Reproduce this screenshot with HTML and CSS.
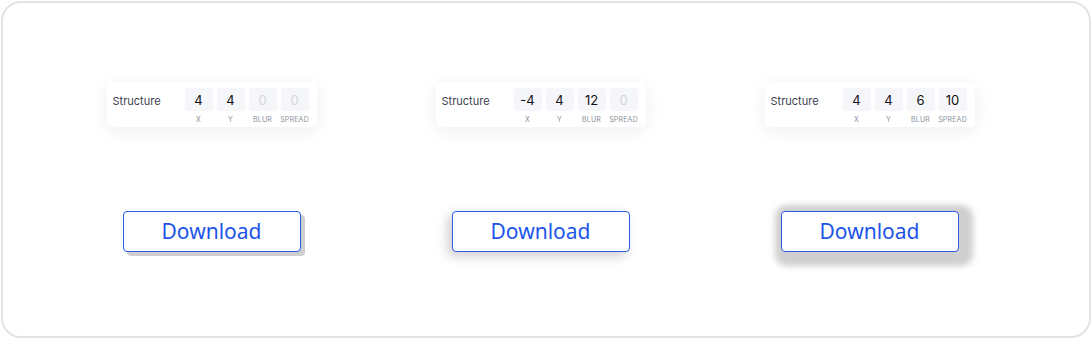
FILE: index.html
```html
<!DOCTYPE html>
<html>
<head>
<meta charset="utf-8">
<link rel="stylesheet" href="styles.css">
</head>
<body>
<div class="frame">
  <div class="col">
    <div class="panel">
      <span class="name">Structure</span>
      <div class="fields">
        <div class="field"><div class="box">4</div><div class="lbl">X</div></div>
        <div class="field"><div class="box">4</div><div class="lbl">Y</div></div>
        <div class="field"><div class="box off">0</div><div class="lbl">Blur</div></div>
        <div class="field"><div class="box off">0</div><div class="lbl">Spread</div></div>
      </div>
    </div>
    <button class="btn s1">Download</button>
  </div>
  <div class="col">
    <div class="panel">
      <span class="name">Structure</span>
      <div class="fields">
        <div class="field"><div class="box">-4</div><div class="lbl">X</div></div>
        <div class="field"><div class="box">4</div><div class="lbl">Y</div></div>
        <div class="field"><div class="box">12</div><div class="lbl">Blur</div></div>
        <div class="field"><div class="box off">0</div><div class="lbl">Spread</div></div>
      </div>
    </div>
    <button class="btn s2">Download</button>
  </div>
  <div class="col">
    <div class="panel">
      <span class="name">Structure</span>
      <div class="fields">
        <div class="field"><div class="box">4</div><div class="lbl">X</div></div>
        <div class="field"><div class="box">4</div><div class="lbl">Y</div></div>
        <div class="field"><div class="box">6</div><div class="lbl">Blur</div></div>
        <div class="field"><div class="box">10</div><div class="lbl">Spread</div></div>
      </div>
    </div>
    <button class="btn s3">Download</button>
  </div>
</div>
</body>
</html>
```

FILE: styles.css
```css
* { box-sizing: border-box; }
html, body { margin: 0; padding: 0; background: #fff; }
body { width: 1092px; height: 339px; padding: 1px; font-family: Inter, "Liberation Sans", sans-serif; }
.frame {
  width: 1090px;
  height: 337px;
  border: 2px solid #e2e3e5;
  border-radius: 20px;
  display: grid;
  grid-template-columns: repeat(3, 329px);
  padding: 79px 0 0 44px;
}
.col {
  display: flex;
  flex-direction: column;
  align-items: center;
}
.panel {
  width: 210px;
  height: 45px;
  background: #fff;
  border-radius: 5px;
  box-shadow: 0 4px 18px rgba(20, 30, 60, 0.07);
  display: flex;
  align-items: flex-start;
  justify-content: space-between;
  padding: 6px 7px 0 6px;
}
.name {
  font-size: 11px;
  color: #3c4150;
  margin-top: 6px;
}
.fields { display: flex; gap: 4px; margin-right: 1px; }
.field { display: flex; flex-direction: column; align-items: center; width: 28px; }
.box {
  width: 28px;
  height: 23px;
  background: #f5f6f9;
  border-radius: 4px;
  font-size: 13px;
  color: #111;
  display: flex;
  align-items: center;
  justify-content: center;
}
.box.off { color: #d3d5da; }
.lbl {
  margin-top: 4px;
  font-size: 7px;
  letter-spacing: 0.2px;
  text-transform: uppercase;
  color: #8a8f9a;
  white-space: nowrap;
}
.btn {
  margin-top: 84px;
  width: 178px;
  height: 41px;
  background: #fff;
  border: 1px solid #2b5be8;
  border-radius: 4px;
  color: #1d55ea;
  font-family: "Noto Sans", "Open Sans", sans-serif;
  font-weight: 400;
  font-size: 21px;
  padding: 0;
  line-height: 1;
}
.s1 { box-shadow: 4px 4px 0 0 #cfcfcf; }
.s2 { box-shadow: -4px 4px 12px 0 rgba(0,0,0,0.2); }
.s3 { box-shadow: 4px 4px 6px 10px #cfcfcf; }
```
